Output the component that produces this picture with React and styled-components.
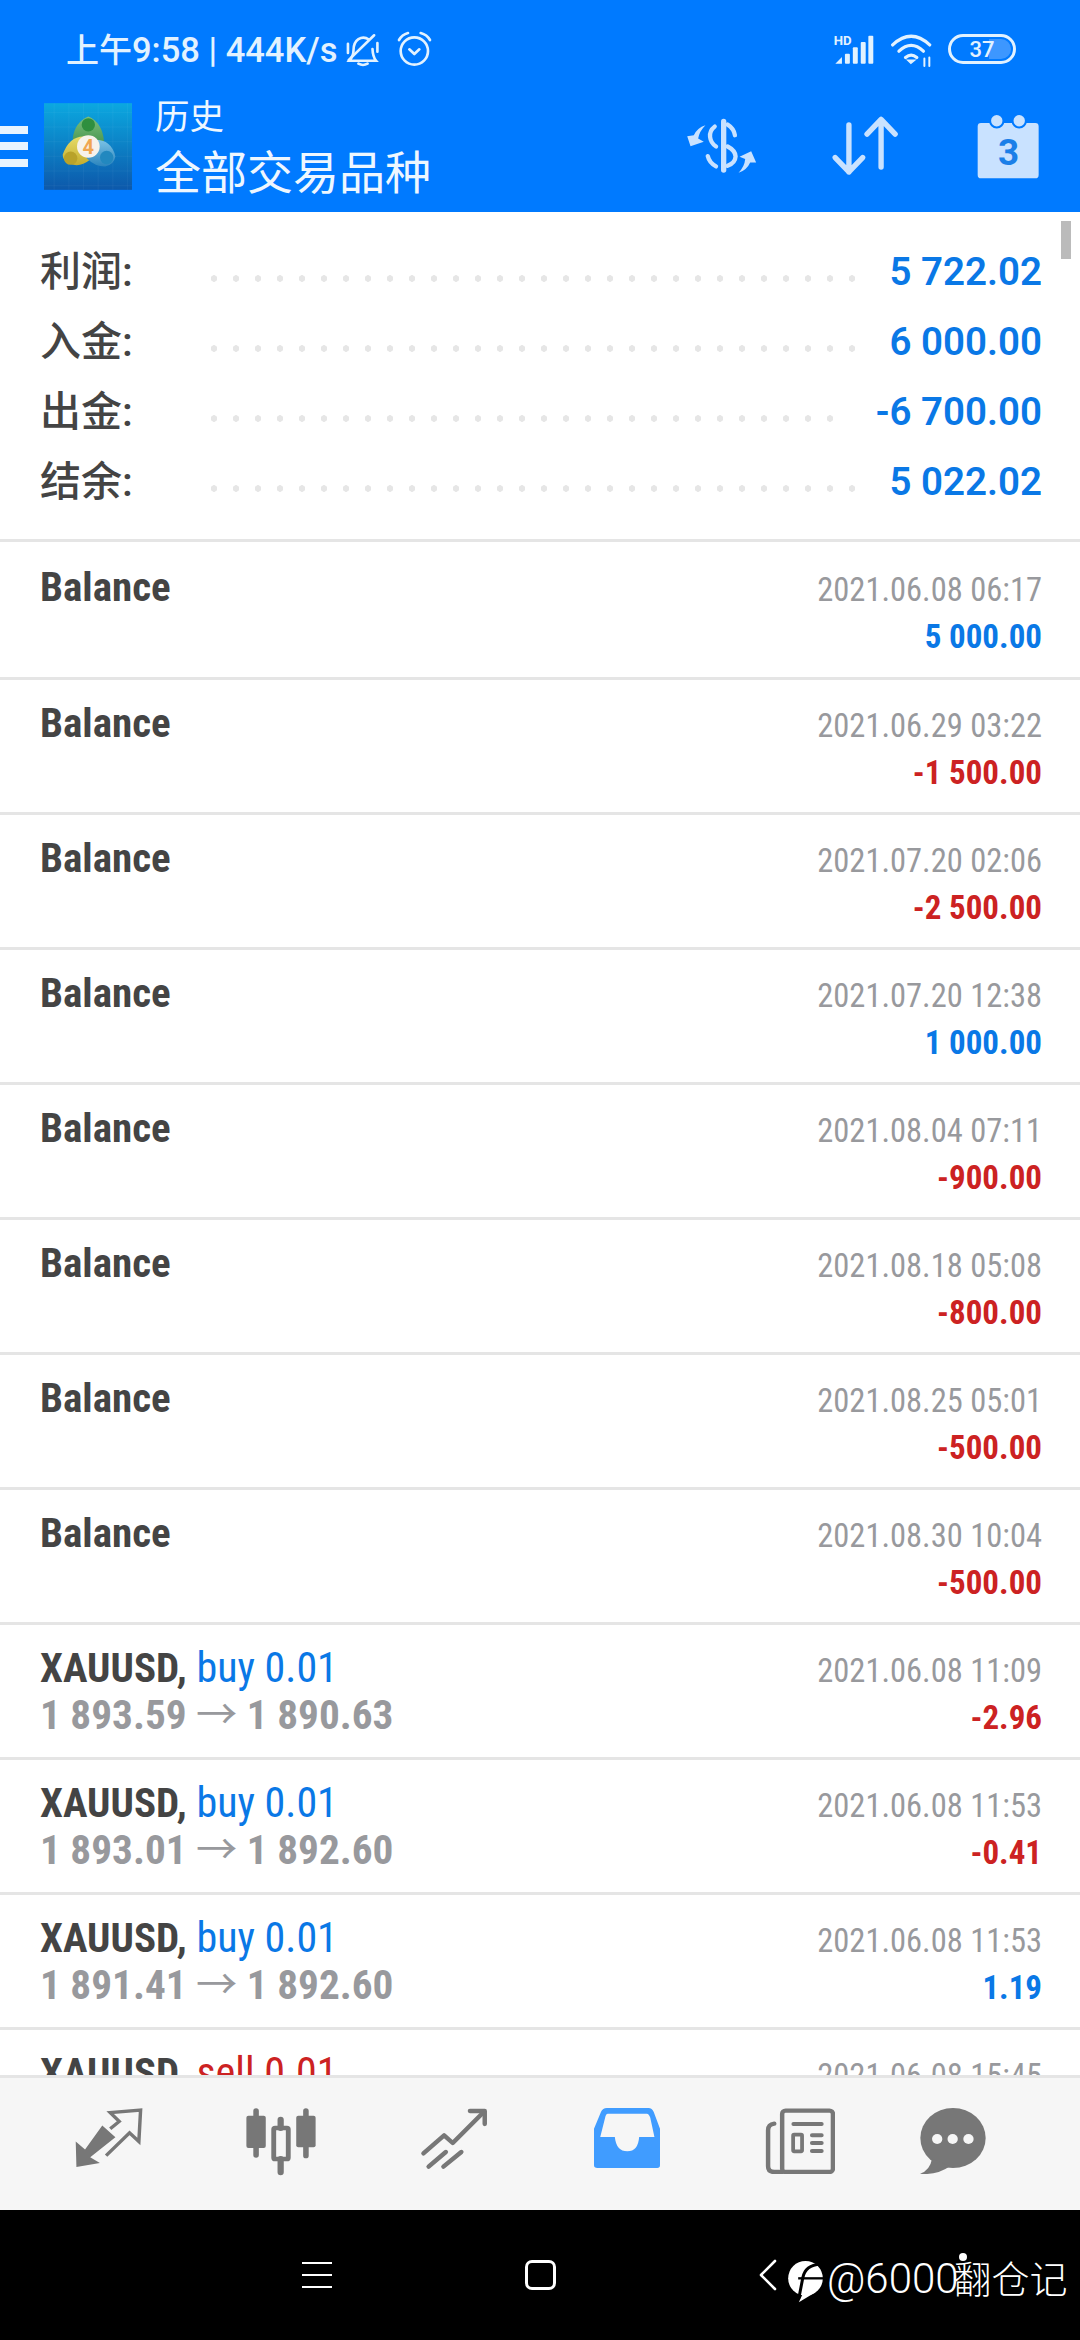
import React from 'react';
import styled, { createGlobalStyle } from 'styled-components';

const GlobalStyle = createGlobalStyle`
  html, body { margin: 0; padding: 0; background: #fff; }
  body { font-family: Roboto, "Noto Sans CJK SC", sans-serif; }
`;

const trades = [
  { name: 'Balance', date: '2021.06.08 06:17', amount: '5 000.00' },
  { name: 'Balance', date: '2021.06.29 03:22', amount: '-1 500.00' },
  { name: 'Balance', date: '2021.07.20 02:06', amount: '-2 500.00' },
  { name: 'Balance', date: '2021.07.20 12:38', amount: '1 000.00' },
  { name: 'Balance', date: '2021.08.04 07:11', amount: '-900.00' },
  { name: 'Balance', date: '2021.08.18 05:08', amount: '-800.00' },
  { name: 'Balance', date: '2021.08.25 05:01', amount: '-500.00' },
  { name: 'Balance', date: '2021.08.30 10:04', amount: '-500.00' },
  { name: 'XAUUSD,', side: 'buy 0.01', open: '1 893.59', close: '1 890.63', date: '2021.06.08 11:09', amount: '-2.96' },
  { name: 'XAUUSD,', side: 'buy 0.01', open: '1 893.01', close: '1 892.60', date: '2021.06.08 11:53', amount: '-0.41' },
  { name: 'XAUUSD,', side: 'buy 0.01', open: '1 891.41', close: '1 892.60', date: '2021.06.08 11:53', amount: '1.19' },
  { name: 'XAUUSD,', side: 'sell 0.01', date: '2021.06.08 15:45' },
];

const totals = [
  ['利润:', '5 722.02'],
  ['入金:', '6 000.00'],
  ['出金:', '-6 700.00'],
  ['结余:', '5 022.02'],
];

function BellOff() {
  return (
    <svg width="36" height="35" viewBox="1005 95 110 105" fill="none" stroke="#e2f2ff" strokeWidth="8" strokeLinecap="round">
      <path d="M1078 117 Q1062 106 1046 116 Q1031 126 1031 150 Q1031 168 1018 182 H1100 Q1090 170 1089 146" />
      <path d="M1016 180 L1094 104" />
      <path d="M1046 191 Q1060 199 1074 191" />
      <path d="M1014 130 V158 M1104 128 V154" />
    </svg>
  );
}

function Alarm() {
  return (
    <svg width="35" height="36" viewBox="1155 95 105 108" fill="none" stroke="#e2f2ff" strokeWidth="8" strokeLinecap="round" strokeLinejoin="round">
      <circle cx="1207" cy="155" r="41" />
      <path d="M1161 122 Q1170 106 1188 101 M1226 101 Q1245 106 1254 122" />
      <path d="M1192 150 L1207 164 L1222 150" />
    </svg>
  );
}

function Signal() {
  return (
    <svg width="43" height="32" viewBox="848 95 124 97" fill="#e2f2ff">
      <text x="850" y="130" fontFamily="Roboto, sans-serif" fontWeight="700" fontSize="40">HD</text>
      <path d="M855 188 L875 168 V188 Z" />
      <rect x="884" y="158" width="15" height="30" rx="3" />
      <rect x="908" y="138" width="15" height="50" rx="3" />
      <rect x="932" y="122" width="15" height="66" rx="3" />
      <rect x="955" y="103" width="15" height="85" rx="3" />
    </svg>
  );
}

function Wifi() {
  return (
    <svg width="45" height="35" viewBox="1012 95 132 106" fill="none" stroke="#e2f2ff" strokeWidth="10" strokeLinecap="round">
      <path d="M1021 134 Q1077 82 1133 134" />
      <path d="M1040 153 Q1077 118 1114 153" />
      <path d="M1060 172 Q1077 158 1094 172" />
      <path d="M1076 190 L1066 180 H1088 Z" fill="#e2f2ff" strokeWidth="4" />
      <path d="M1117 175 V198 M1132 172 V198" strokeWidth="6" />
    </svg>
  );
}

function Swap() {
  return (
    <svg width="76" height="58" viewBox="420 345 220 175" fill="none" stroke="#c9e2ff" strokeWidth="13" strokeLinecap="round">
      <path d="M535 358 V505" strokeWidth="16" />
      <path d="M547 368 Q566 380 569 400" />
      <path d="M508 374 Q492 386 494 405 Q496 424 512 434" />
      <path d="M487 463 Q492 484 512 494" />
      <path d="M547 434 Q570 446 571 464 Q570 484 547 492" />
      <path d="M480 370 Q455 378 445 400 L425 403 L435 433 L475 420 L458 410 Q462 388 480 370Z" fill="#c9e2ff" stroke="none" />
      <path d="M580 513 Q605 505 615 482 L633 482 L618 448 L583 465 L600 472 Q598 495 580 513Z" fill="#c9e2ff" stroke="none" />
    </svg>
  );
}

function Sort() {
  return (
    <svg width="71" height="62" viewBox="840 345 205 185" fill="none" stroke="#c9e2ff" strokeWidth="16" strokeLinecap="round" strokeLinejoin="round">
      <path d="M896 375 V515 M855 472 L896 515 L937 472" />
      <path d="M992 500 V360 M950 402 L992 358 L1034 402" />
    </svg>
  );
}

function Calendar() {
  return (
    <svg width="69" height="67" viewBox="1260 335 200 200">
      <rect x="1268" y="365" width="182" height="165" rx="10" fill="#c9e2ff" />
      <circle cx="1325" cy="358" r="20" fill="#c9e2ff" stroke="#007aff" strokeWidth="6" />
      <circle cx="1392" cy="358" r="20" fill="#c9e2ff" stroke="#007aff" strokeWidth="6" />
      <text x="1360" y="490" textAnchor="middle" fill="#1b7fe8" fontFamily="Roboto, sans-serif" fontWeight="700" fontSize="110">3</text>
    </svg>
  );
}

function Logo() {
  return (
    <svg width="88" height="87" viewBox="12 15 264 260">
      <defs>
        <linearGradient id="logoBg" x1="0" y1="0" x2="0" y2="1">
          <stop offset="0" stopColor="#0ba8e0" />
          <stop offset="1" stopColor="#0d58aa" />
        </linearGradient>
        <linearGradient id="logoGreen" x1="0" y1="0" x2="0" y2="1">
          <stop offset="0" stopColor="#7cc07c" />
          <stop offset="1" stopColor="#3f8f4a" />
        </linearGradient>
        <linearGradient id="logoYellow" x1="0" y1="0" x2="0" y2="1">
          <stop offset="0" stopColor="#e6dc6a" />
          <stop offset="1" stopColor="#c4ac2c" />
        </linearGradient>
        <linearGradient id="logoBlue" x1="0" y1="0" x2="0" y2="1">
          <stop offset="0" stopColor="#7cc3e6" />
          <stop offset="1" stopColor="#2a84bd" />
        </linearGradient>
        <pattern id="logoGrid" width="44" height="44" patternUnits="userSpaceOnUse">
          <path d="M44 0 V44 H0" fill="none" stroke="#ffffff" strokeOpacity="0.1" strokeWidth="2" />
        </pattern>
      </defs>
      <rect x="12" y="15" width="264" height="260" fill="url(#logoBg)" />
      <rect x="12" y="15" width="264" height="260" fill="url(#logoGrid)" />
      <path d="M98 122 Q104 72 145 55 Q186 72 192 128 L145 150 Z" fill="url(#logoGreen)" />
      <circle cx="145" cy="80" r="20" fill="#2f8f3f" />
      <path d="M135 115 Q88 112 68 170 Q68 195 100 200 Q125 205 150 185 Z" fill="url(#logoYellow)" />
      <circle cx="92" cy="180" r="20" fill="#b8a22a" />
      <path d="M165 125 Q215 125 226 175 Q222 200 195 205 Q165 205 140 180 Z" fill="url(#logoBlue)" />
      <circle cx="200" cy="178" r="20" fill="#2288bf" />
      <circle cx="145" cy="145" r="34" fill="#f7f2ea" />
      <text x="145" y="167" textAnchor="middle" fill="#f0a650" fontFamily="Roboto, sans-serif" fontWeight="700" fontSize="60">4</text>
    </svg>
  );
}

function TradeIcon() {
  return (
    <svg width="69" height="61" viewBox="215 248 200 182" preserveAspectRatio="none" fill="none">
      <path d="M220 348 L247 372 L297 300 L335 335 L262 395 L290 412 L222 424 Z" fill="#777" />
      <path d="M320 310 L346 288 L320 262 L408 254 L403 348 L376 322 L308 390" stroke="#777" strokeWidth="10" />
    </svg>
  );
}

function CandleIcon() {
  return (
    <svg width="72" height="68" viewBox="712 235 208 204" preserveAspectRatio="none" fill="none" stroke="#777" strokeLinecap="round">
      <path d="M744 244 V376 M888 244 V378" strokeWidth="16" />
      <rect x="716" y="258" width="56" height="97" rx="6" fill="#777" stroke="none" />
      <rect x="860" y="258" width="56" height="95" rx="6" fill="#777" stroke="none" />
      <path d="M815 270 V295 M815 388 V428" strokeWidth="18" />
      <rect x="795" y="295" width="42" height="93" rx="4" strokeWidth="14" />
    </svg>
  );
}

function ChartIcon() {
  return (
    <svg width="67.5" height="62" viewBox="1220 240 196 186" preserveAspectRatio="none" fill="none" stroke="#777" strokeWidth="13" strokeLinecap="round" strokeLinejoin="round">
      <path d="M1230 376 L1290 322 L1315 345 L1405 252" />
      <path d="M1365 249 H1408 V288" />
      <path d="M1245 416 L1295 372 M1288 416 L1340 372" />
    </svg>
  );
}

function InboxIcon() {
  return (
    <svg width="66" height="60" viewBox="158 243 190 180" preserveAspectRatio="none">
      <path
        fillRule="evenodd"
        fill="#409cff"
        d="M195 243 H315 Q325 243 330 255 L348 305 V415 Q348 423 340 423 H168 Q158 423 158 415 V305 L178 255 Q183 243 195 243Z M198 260 H310 Q316 260 320 272 L332 330 H288 Q285 373 254 373 Q222 373 218 330 H176 L190 272 Q192 260 198 260Z"
      />
    </svg>
  );
}

function NewsIcon() {
  return (
    <svg width="70" height="66" viewBox="655 233 204 198" preserveAspectRatio="none" fill="none" stroke="#777" strokeLinecap="round">
      <rect x="705" y="241" width="148" height="184" rx="10" strokeWidth="13" />
      <path d="M682 280 Q664 282 664 300 V408 Q664 425 682 425 H705" strokeWidth="13" />
      <path d="M738 281 H820 M792 315 H820 M792 338 H820 M792 362 H820" strokeWidth="12" />
      <rect x="737" y="313" width="26" height="50" rx="3" strokeWidth="11" />
    </svg>
  );
}

function ChatIcon() {
  return (
    <svg width="66" height="66" viewBox="1103 233 192 198" preserveAspectRatio="none">
      <ellipse cx="1199" cy="323" rx="95" ry="90" fill="#777" />
      <path d="M1138 385 Q1132 420 1103 430 Q1152 436 1190 408 Z" fill="#777" />
      <circle cx="1153" cy="326" r="15" fill="#f6f6f6" />
      <circle cx="1198" cy="326" r="15" fill="#f6f6f6" />
      <circle cx="1244" cy="326" r="15" fill="#f6f6f6" />
    </svg>
  );
}

function WatermarkMark() {
  return (
    <svg width="37" height="42" viewBox="113 48 110 126">
      <circle cx="168" cy="100" r="52" fill="#fff" />
      <path d="M162 142 L148 172 L198 142 Z" fill="#fff" />
      <path d="M212 58 Q168 60 160 98 L148 160" fill="none" stroke="#000" strokeWidth="9" />
      <path d="M146 100 H222" fill="none" stroke="#000" strokeWidth="7" />
    </svg>
  );
}

function App() {
  return (
    <>
      <GlobalStyle />
      <Screen>
        <Header>
          <StatusBar>
            <StatusLeft>
              <Clock><Han>上午</Han>9:58 | 444K/s</Clock>
              <BellOff />
              <Alarm />
            </StatusLeft>
            <StatusRight>
              <Signal />
              <Wifi />
              <Battery>
                <BatteryFill />
                <BatteryText>37</BatteryText>
              </Battery>
            </StatusRight>
          </StatusBar>
          <AppBar>
            <Burger><i /><i /><i /></Burger>
            <Logo />
            <Titles>
              <SmallTitle>历史</SmallTitle>
              <BigTitle>全部交易品种</BigTitle>
            </Titles>
            <Slot $gap={0}><Swap /></Slot>
            <Slot $gap={69}><Sort /></Slot>
            <Slot $gap={74}><Calendar /></Slot>
          </AppBar>
        </Header>

        <Content>
          <Thumb />
          <Summary>
            {totals.map(([label, value]) => (
              <SummaryRow key={label}>
                <SummaryLabel>{label}</SummaryLabel>
                <Dots />
                <SummaryValue>{value}</SummaryValue>
              </SummaryRow>
            ))}
          </Summary>
          {trades.map((t, i) => (
            <Row key={i} $first={i === 0} $ledger={!t.side}>
              <Name>
                {t.name}
                {t.side && <Side $sell={t.side.startsWith('sell')}> {t.side}</Side>}
              </Name>
              <DateText>{t.date}</DateText>
              <Prices>
                {t.open && <>{t.open} <Arrow>→</Arrow> {t.close}</>}
              </Prices>
              <Amount $loss={t.amount && t.amount.startsWith('-')}>{t.amount}</Amount>
            </Row>
          ))}
        </Content>

        <BottomNav>
          <Slot $gap={74}><TradeIcon /></Slot>
          <Slot $gap={102}><CandleIcon /></Slot>
          <Slot $gap={103}><ChartIcon /></Slot>
          <Slot $gap={106}><InboxIcon /></Slot>
          <Slot $gap={105.5}><NewsIcon /></Slot>
          <Slot $gap={84.5}><ChatIcon /></Slot>
        </BottomNav>

        <SystemNav>
          <MenuLines><i /><i /><i /></MenuLines>
          <HomeSquare />
          <BackChevron viewBox="0 0 20 32" width="20" height="32" fill="none" stroke="#fff" strokeWidth="2.6" strokeLinecap="round" strokeLinejoin="round">
            <path d="M17 2 L3 16 L17 30" />
          </BackChevron>
          <MarkSlot><WatermarkMark /></MarkSlot>
          <Watermark>@6000<WatermarkHan>翻仓记</WatermarkHan><WatermarkDot /></Watermark>
        </SystemNav>
      </Screen>
    </>
  );
}

export default App;

const Screen = styled.div`
  width: 1080px;
  height: 2340px;
  display: flex;
  flex-direction: column;
  overflow: hidden;
  background: #fff;
`;

const Header = styled.header`
  height: 212px;
  flex: none;
  background: #007aff;
  color: #eaf5ff;
`;

const StatusBar = styled.div`
  height: 100px;
  box-sizing: border-box;
  display: flex;
  align-items: center;
  justify-content: space-between;
  padding: 0 64px 2px 66px;
`;

const StatusLeft = styled.div`
  display: flex;
  align-items: center;
  gap: 16px;
`;

const Clock = styled.span`
  font-family: Roboto, "Noto Sans CJK SC", sans-serif;
  font-size: 34.5px;
  font-weight: 500;
  color: #e2f2ff;
  margin: -2px -8px 0 0;
`;

const Han = styled.span`
  font-family: "Noto Sans CJK SC", sans-serif;
  font-size: 33px;
`;

const StatusRight = styled.div`
  display: flex;
  align-items: center;
  gap: 14px;
`;

const Battery = styled.div`
  position: relative;
  width: 68px;
  height: 30px;
  box-sizing: border-box;
  border: 3px solid #e2f2ff;
  border-radius: 15px;
  display: flex;
  align-items: center;
  justify-content: center;
`;

const BatteryFill = styled.div`
  position: absolute;
  right: 2px;
  top: 2px;
  bottom: 2px;
  width: 22px;
  border-radius: 0 10px 10px 0;
  background: #3d97ff;
`;

const BatteryText = styled.span`
  position: relative;
  font-size: 22px;
  font-weight: 500;
  color: #e2f2ff;
`;

const AppBar = styled.div`
  height: 112px;
  box-sizing: border-box;
  padding: 0 37px 20px 0;
  display: flex;
  align-items: center;
`;

const Burger = styled.div`
  width: 28px;
  margin-right: 16px;
  display: flex;
  flex-direction: column;
  gap: 8.5px;
  i {
    display: block;
    height: 8px;
    background: #e8f4ff;
  }
`;

const Titles = styled.div`
  margin-left: 23px;
  flex: 1;
`;

const SmallTitle = styled.div`
  font-family: "Noto Sans CJK SC", sans-serif;
  font-size: 34.5px;
  line-height: 44px;
  color: #eef7ff;
`;

const BigTitle = styled.div`
  font-family: "Noto Sans CJK SC", sans-serif;
  font-size: 46px;
  line-height: 62px;
  margin-top: 2px;
  color: #eef7ff;
`;

const Slot = styled.div`
  margin-left: ${p => p.$gap}px;
  display: flex;
`;

const Content = styled.main`
  position: relative;
  flex: 1;
  overflow: hidden;
`;

const Thumb = styled.div`
  position: absolute;
  right: 9px;
  top: 9px;
  width: 10px;
  height: 38px;
  background: #bbb;
`;

const Summary = styled.section`
  height: 327px;
  box-sizing: border-box;
  padding-top: 23px;
`;

const SummaryRow = styled.div`
  height: 70px;
  display: flex;
  align-items: center;
  padding: 0 38px 0 40px;
`;

const SummaryLabel = styled.span`
  width: 170px;
  flex: none;
  margin-top: -4px;
  font-family: Roboto, "Noto Sans CJK SC", sans-serif;
  font-size: 41px;
  font-weight: 500;
  color: #444;
`;

const Dots = styled.span`
  flex: 1;
  height: 7px;
  margin: 16px 30px 0 0;
  background-image: radial-gradient(circle, #e6e6e6 3px, transparent 3.5px);
  background-size: 22px 7px;
  background-repeat: repeat-x;
  background-position: -7px 0;
`;

const SummaryValue = styled.span`
  margin-top: 2px;
  font-size: 38.5px;
  font-weight: 600;
  color: #0a78e6;
`;

const Row = styled.article`
  height: ${p => (p.$first ? 138 : 135)}px;
  box-sizing: border-box;
  border-top: 3px solid #e5e5e5;
  padding: ${p => (p.$first ? 21 : 19)}px 38px 0 40px;
  display: grid;
  grid-template-columns: 1fr auto;
  grid-template-rows: ${p => (p.$ledger ? 50 : 47)}px 48px;
  align-items: baseline;
  font-stretch: 75%;
`;

const Name = styled.div`
  font-size: 41px;
  font-weight: 700;
  line-height: 48px;
  color: #444;
  white-space: pre;
`;

const Side = styled.span`
  font-size: 42px;
  font-weight: 400;
  color: ${p => (p.$sell ? '#cc2222' : '#0a78e6')};
`;

const DateText = styled.div`
  font-size: 32.5px;
  line-height: 48px;
  color: #98999d;
  text-align: right;
`;

const Prices = styled.div`
  font-size: 41.25px;
  font-weight: 700;
  line-height: 48px;
  color: #98999d;
`;

const Arrow = styled.span`
  font-weight: 400;
`;

const Amount = styled.div`
  font-size: 33px;
  font-weight: 700;
  line-height: 48px;
  text-align: right;
  color: ${p => (p.$loss ? '#cc2222' : '#0a78e6')};
`;

const BottomNav = styled.nav`
  height: 135px;
  flex: none;
  box-sizing: border-box;
  border-top: 3px solid #e5e5e5;
  background: #f6f6f6;
  display: flex;
  align-items: flex-start;
  padding-top: 30px;
`;

const SystemNav = styled.div`
  height: 130px;
  flex: none;
  background: #000;
  color: #fff;
  display: flex;
  align-items: center;
  padding-left: 302px;
  box-sizing: border-box;
`;

const MenuLines = styled.div`
  width: 30px;
  display: flex;
  flex-direction: column;
  gap: 9.5px;
  i {
    display: block;
    height: 2.5px;
    background: #fff;
  }
`;

const HomeSquare = styled.div`
  width: 31px;
  height: 30px;
  margin-left: 193px;
  box-sizing: border-box;
  border: 3px solid #fff;
  border-radius: 7px;
`;

const BackChevron = styled.svg`
  margin-left: 202px;
`;

const MarkSlot = styled.div`
  display: flex;
  margin: 14px 0 0 9px;
`;

const Watermark = styled.div`
  position: relative;
  margin: 3px 0 0 3px;
  font-size: 42px;
  font-weight: 300;
  white-space: nowrap;
`;

const WatermarkHan = styled.span`
  font-family: "Noto Sans CJK SC", sans-serif;
  font-size: 38px;
  margin-left: -5px;
`;

const WatermarkDot = styled.i`
  position: absolute;
  left: 132px;
  top: 4px;
  width: 8px;
  height: 8px;
  border-radius: 50%;
  background: #fff;
`;
